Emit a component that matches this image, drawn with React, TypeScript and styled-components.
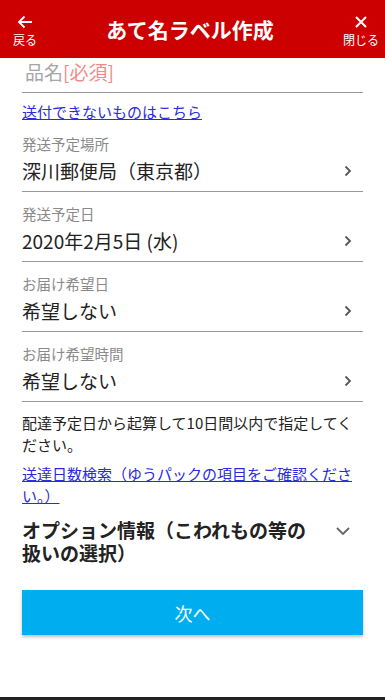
import styled, { createGlobalStyle } from 'styled-components';

const GlobalStyle = createGlobalStyle`
  html, body {
    margin: 0;
    padding: 0;
    background: #fff;
  }
  body {
    font-family: "Noto Sans CJK JP", "Noto Sans", sans-serif;
    color: #222;
  }
`;

type Field = {
  label: string;
  value: string;
};

const fields: Field[] = [
  { label: '発送予定場所', value: '深川郵便局（東京都）' },
  { label: '発送予定日', value: '2020年2月5日 (水)' },
  { label: 'お届け希望日', value: '希望しない' },
  { label: 'お届け希望時間', value: '希望しない' }
];

function ChevronRight() {
  return (
    <svg width="10" height="14" viewBox="0 0 10 14">
      <path d="M2.5 2.5 L7 7 L2.5 11.5" fill="none" stroke="#555" strokeWidth="1.8" />
    </svg>
  );
}

function ChevronDown() {
  return (
    <svg width="16" height="10" viewBox="0 0 16 10">
      <path d="M2 2 L8 8 L14 2" fill="none" stroke="#666" strokeWidth="1.8" />
    </svg>
  );
}

function App() {
  return (
    <Screen>
      <GlobalStyle />
      <Header>
        <HeaderButton>
          <svg width="16" height="14" viewBox="0 0 16 14">
            <path d="M15 7 H2 M7.5 1.5 L2 7 L7.5 12.5" fill="none" stroke="#fff" strokeWidth="1.8" />
          </svg>
          <HeaderButtonLabel>戻る</HeaderButtonLabel>
        </HeaderButton>
        <Title>あて名ラベル作成</Title>
        <HeaderButton>
          <svg width="14" height="14" viewBox="0 0 14 14">
            <path d="M2 2 L12 12 M12 2 L2 12" fill="none" stroke="#fff" strokeWidth="2" />
          </svg>
          <HeaderButtonLabel>閉じる</HeaderButtonLabel>
        </HeaderButton>
      </Header>

      <Form>
        <NameInput>
          品名<Required>[必須]</Required>
        </NameInput>
        <TopLink href="#">送付できないものはこちら</TopLink>

        {fields.map((field) => (
          <SelectField key={field.label}>
            <FieldLabel>{field.label}</FieldLabel>
            <FieldValueRow>
              <FieldValue>{field.value}</FieldValue>
              <ChevronRight />
            </FieldValueRow>
          </SelectField>
        ))}

        <Note>配達予定日から起算して10日間以内で指定してください。</Note>
        <NoteLink href="#">送達日数検索（ゆうパックの項目をご確認ください。）</NoteLink>

        <OptionRow>
          <OptionTitle>オプション情報（こわれもの等の扱いの選択）</OptionTitle>
          <OptionToggle>
            <ChevronDown />
          </OptionToggle>
        </OptionRow>

        <NextButton>次へ</NextButton>
      </Form>
    </Screen>
  );
}

export default App;

const Screen = styled.div`
  height: 700px;
  box-sizing: border-box;
  border-bottom: 3px solid #222;
  display: flex;
  flex-direction: column;
  overflow: hidden;
`;

const Header = styled.header`
  height: 58px;
  background-color: #cc0000;
  display: flex;
  align-items: center;
  justify-content: space-between;
  padding: 0 6px 0 13px;
  color: #fff;
`;

const HeaderButton = styled.div`
  display: flex;
  flex-direction: column;
  align-items: center;
  gap: 4px;
  padding-top: 4px;
`;

const HeaderButtonLabel = styled.span`
  font-size: 12px;
  line-height: 14px;
`;

const Title = styled.h1`
  margin: 0;
  font-size: 21px;
  font-weight: 700;
`;

const Form = styled.main`
  padding: 0 22px;
  display: flex;
  flex-direction: column;
`;

const NameInput = styled.div`
  padding: 2px 0 8px 3px;
  font-size: 19px;
  line-height: 24px;
  color: #a6a6a6;
  border-bottom: 1px solid #999;
`;

const Required = styled.span`
  color: #f28a8a;
`;

const TopLink = styled.a`
  margin-top: 9px;
  font-size: 15px;
  line-height: 20px;
  color: #2a2ae0;
  align-self: flex-start;
`;

const SelectField = styled.div`
  padding-top: 12px;
  border-bottom: 1px solid #999;
  padding-bottom: 7px;
`;

const FieldLabel = styled.div`
  font-size: 14.5px;
  line-height: 20px;
  color: #8a8a8a;
`;

const FieldValueRow = styled.div`
  margin-top: 4px;
  display: flex;
  align-items: center;
  justify-content: space-between;
  padding-right: 10px;
`;

const FieldValue = styled.div`
  font-size: 19px;
  line-height: 26px;
  color: #222;
`;

const Note = styled.p`
  margin: 10px 0 0;
  font-size: 15px;
  line-height: 22px;
  color: #222;
`;

const NoteLink = styled.a`
  margin-top: 7px;
  font-size: 15px;
  line-height: 22px;
  color: #2a2ae0;
`;

const OptionRow = styled.div`
  margin-top: 11px;
  display: flex;
  align-items: flex-start;
`;

const OptionTitle = styled.h2`
  flex: 1;
  margin: 0;
  font-size: 19px;
  line-height: 23px;
  font-weight: 700;
  color: #222;
`;

const OptionToggle = styled.div`
  width: 48px;
  display: flex;
  justify-content: flex-end;
  padding: 8px 12px 0 0;
  box-sizing: border-box;
`;

const NextButton = styled.button`
  margin-top: 26px;
  height: 45px;
  border: none;
  background-color: #00aeef;
  color: #fff;
  font-family: inherit;
  font-size: 18px;
  box-shadow: 0 2px 3px rgba(0, 0, 0, 0.25);
`;
